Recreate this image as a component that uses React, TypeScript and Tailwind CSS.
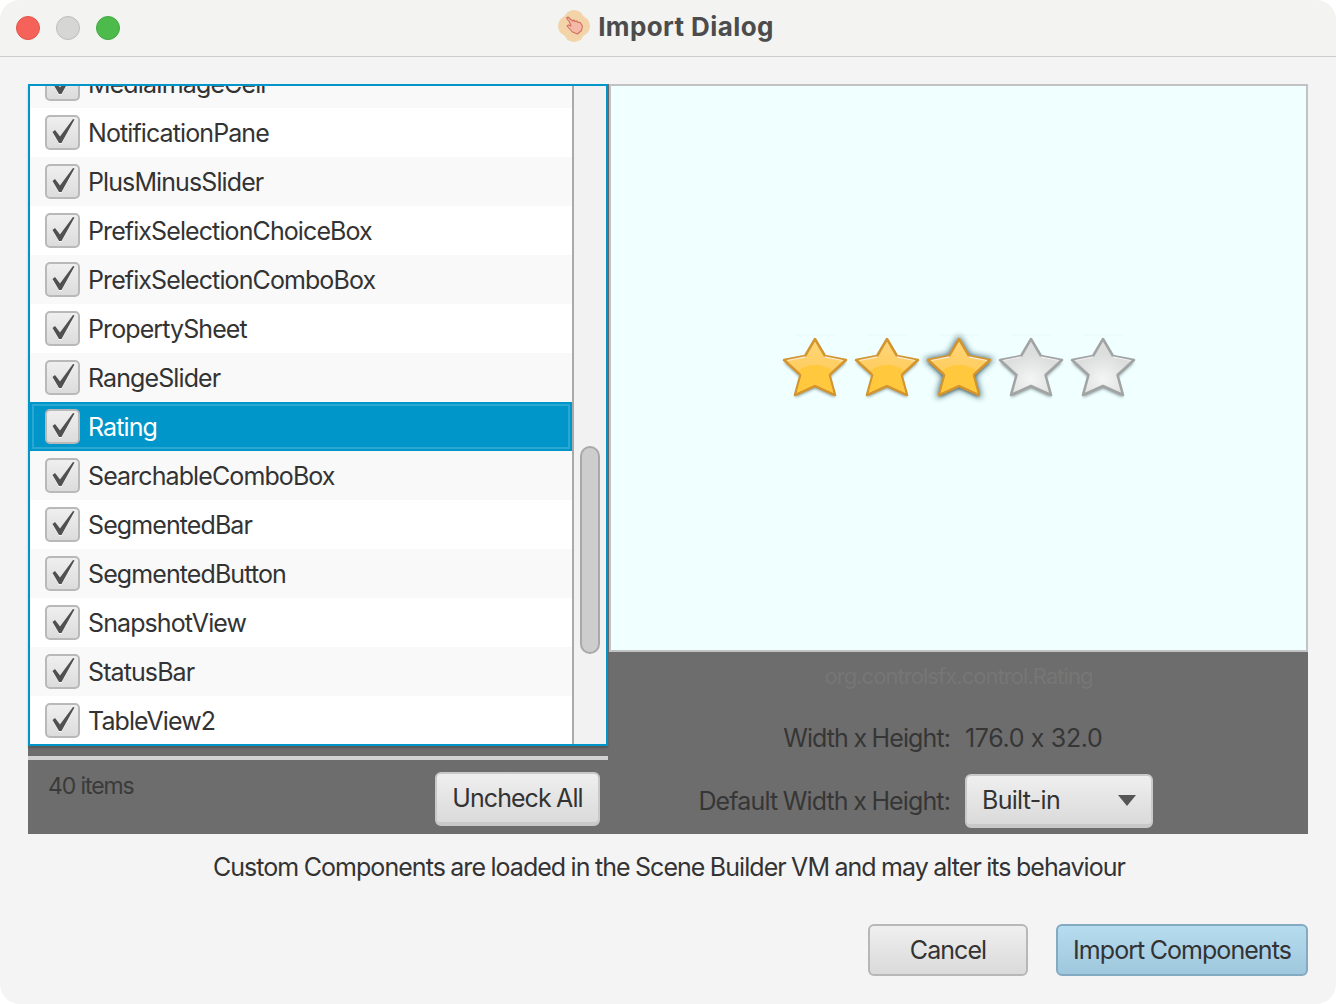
import React from "react";

const font = { fontFamily: "Inter, 'Noto Sans', sans-serif" };

const rows = [
  "NotificationPane",
  "PlusMinusSlider",
  "PrefixSelectionChoiceBox",
  "PrefixSelectionComboBox",
  "PropertySheet",
  "RangeSlider",
  "Rating",
  "SearchableComboBox",
  "SegmentedBar",
  "SegmentedButton",
  "SnapshotView",
  "StatusBar",
  "TableView2",
];

function Check() {
  return (
    <span className="w-[35px] h-[35px] shrink-0 rounded-[5px] border-2 border-[#b9b9b9] bg-gradient-to-b from-[#efefef] to-[#dcdcdc] flex">
      <svg width="31" height="31" viewBox="0 0 31 31">
        <path d="M5.5 16 L8 14 L13 20.5 L26 3 L27.5 3.5 L14.5 27 L12 27 Z" fill="#ffffff" opacity="0.7" />
        <path d="M5.5 15 L8 13 L13 19.5 L26 2 L27.5 2.5 L14.5 26 L12 26 Z" fill="#505050" />
      </svg>
    </span>
  );
}

function Row({ label, index }: { label: string; index: number }) {
  const selected = label === "Rating";
  const odd = index % 2 === 1;
  return (
    <div
      className={`h-[49px] shrink-0 flex items-center pl-[15px] gap-[8px] text-[25px] tracking-[-0.9px] ${
        selected
          ? "bg-[#0096c9] text-white shadow-[inset_0_0_0_2px_#0096c9,inset_0_0_0_4px_#2aa8d4]"
          : odd
            ? "bg-[#f9f9f9] text-[#333333]"
            : "bg-white text-[#333333]"
      }`}
    >
      <Check />
      <span className="pt-[2px]">{label}</span>
    </div>
  );
}

function Star({ on, glow }: { on: boolean; glow?: boolean }) {
  const pts = "32,1 42,18 63,22 46.5,37 52,57 32,48 12,57 17.5,37 1,22 22,18";
  return (
    <svg width="64" height="64" viewBox="0 0 64 64" className="overflow-visible">
      <defs>
        <linearGradient id="goldTop" x1="0" y1="0" x2="0" y2="1">
          <stop offset="0" stopColor="#ffd67a" />
          <stop offset="1" stopColor="#ffc64a" />
        </linearGradient>
        <radialGradient id="silverFill" cx="0.5" cy="0.72" r="0.45">
          <stop offset="0" stopColor="#f4f6f5" />
          <stop offset="1" stopColor="#dcdedd" />
        </radialGradient>
        <filter id="blur2" x="-30%" y="-30%" width="160%" height="160%">
          <feGaussianBlur stdDeviation="3" />
        </filter>
        <filter id="blur1" x="-30%" y="-30%" width="160%" height="160%">
          <feGaussianBlur stdDeviation="1.5" />
        </filter>
        <filter id="blur05" x="-10%" y="-10%" width="120%" height="120%">
          <feGaussianBlur stdDeviation="0.6" />
        </filter>
      </defs>
      <path d="M12 -3 H52" stroke="#8a9a9a" strokeWidth="1" opacity="0.08" />
      {glow ? (
        <polygon points={pts} fill="#1f4a56" stroke="#1f4a56" strokeWidth="4" opacity="0.8" filter="url(#blur2)" />
      ) : null}
      <polygon points={pts} transform="translate(0 2.5)" fill="#3f5658" opacity="0.6" filter="url(#blur1)" />
      <g filter="url(#blur05)">
        <polygon
          points={pts}
          fill={on ? "url(#goldTop)" : "url(#silverFill)"}
          stroke={on ? "#d3952f" : "#a2a4a3"}
          strokeWidth="2.5"
          strokeLinejoin="round"
        />
        {on ? (
          <path d="M15.5 32 Q32 22 48.5 32 L45.5 37 L50.5 55 L32 46.5 L13.5 55 L18.5 37 Z" fill="#ffc83e" />
        ) : null}
        <path d="M4 22.5 L22.5 18.8 M41.5 18.8 L60 22.5" stroke="#ffffff" strokeWidth="1.2" opacity="0.8" />
      </g>
    </svg>
  );
}

function Logo() {
  return (
    <svg width="32" height="32" viewBox="0 0 32 32">
      <g fill="#f2c27c" opacity="0.62">
        <ellipse cx="16" cy="9.5" rx="10" ry="9.5" />
        <ellipse cx="16" cy="22.5" rx="10" ry="9.5" />
        <ellipse cx="9" cy="16" rx="9" ry="10" />
        <ellipse cx="23" cy="16" rx="9" ry="10" />
      </g>
      <path
        d="M8.5 8 L10 7 L14.5 11 L15.8 10 L17.2 11.5 L18.8 11 L20.2 12.5 L22 12.2 L24.5 16 L23.5 20.5 L19.5 24 L14.5 22 L9 16 L10.5 15 L13 16 L11.5 12 Z"
        fill="#f4b8a8"
        stroke="#d2705c"
        strokeWidth="1.1"
        strokeLinejoin="round"
      />
    </svg>
  );
}

function Btn({ children, className }: { children: React.ReactNode; className: string }) {
  return (
    <button
      className={`rounded-[6px] border-2 text-[25px] tracking-[-0.95px] [word-spacing:-0.7px] text-[#333333] flex items-center ${className}`}
    >
      {children}
    </button>
  );
}

export default function App() {
  return (
    <div className="w-[1336px] h-[1004px] bg-white overflow-hidden" style={font}>
      <div className="w-full h-full rounded-[20px] bg-[#f4f4f4] flex flex-col overflow-hidden">
        <header className="h-[57px] shrink-0 border-b border-[#cdcdcd] bg-[#f3f3f2] relative flex items-center justify-center">
          <div className="absolute left-[16px] top-[16px] flex gap-[16px]">
            <span className="w-[24px] h-[24px] rounded-full bg-[#f5625a] border border-[#e0534b]" />
            <span className="w-[24px] h-[24px] rounded-full bg-[#d6d6d4] border border-[#bdbdbb]" />
            <span className="w-[24px] h-[24px] rounded-full bg-[#4dbb4b] border border-[#42a841]" />
          </div>
          <div className="flex items-center gap-[8px] -mt-[4px] -ml-[4px]">
            <Logo />
            <span className="text-[26px] font-bold tracking-[0.4px] text-[#4c4c4c]">Import Dialog</span>
          </div>
        </header>

        <main className="mx-[28px] mt-[27px] h-[750px] shrink-0 flex bg-[#6d6d6d]">
          <section className="w-[580px] shrink-0 flex flex-col">
            <div className="h-[662px] shrink-0 border-2 border-[#0096c9] flex overflow-hidden bg-white shadow-[0_2px_2px_rgba(0,0,0,0.2)]">
              <div className="w-[542px] shrink-0 flex flex-col overflow-hidden">
                <div className="h-[49px] shrink-0 -mt-[27px] bg-[#f9f9f9] flex items-center pl-[15px] gap-[8px] text-[25px] tracking-[-0.9px] text-[#333333]">
                  <Check />
                  <span className="pt-[2px]">MediaImageCell</span>
                </div>
                {rows.map((r, i) => (
                  <Row key={r} label={r} index={i} />
                ))}
              </div>
              <div className="flex-1 border-l-2 border-[#aaaaaa] bg-[#f2f2f2] pl-[6px] pt-[360px]">
                <div className="w-[20px] h-[208px] rounded-[10px] border-2 border-[#a9a9a9] bg-[#cdcdcd]" />
              </div>
            </div>
            <div className="h-[4px] mt-[10px] shrink-0 bg-[#d2d2d2]" />
            <div className="flex-1 flex items-start justify-between pl-[21px] pr-[8px] pt-[12px]">
              <span className="text-[23px] tracking-[-1.1px] text-[#3a3a3a] -mt-[3px] -ml-[1px]">40 items</span>
              <Btn className="w-[165px] h-[54px] pt-[2px] justify-center bg-gradient-to-b from-[#efefef] to-[#dadada] border-[#c9c9c9] border-b-[4px]">
                Uncheck All
              </Btn>
            </div>
          </section>

          <section className="flex-1 flex flex-col pl-[1px]">
            <div className="h-[568px] shrink-0 bg-[#f0ffff] border-2 border-[#c2c2c2] flex items-center justify-center">
              <div className="flex gap-[8px] mt-[4px] ml-[1px]">
                <Star on />
                <Star on />
                <Star on glow />
                <Star on={false} />
                <Star on={false} />
              </div>
            </div>
            <div className="flex-1 relative">
              <div className="text-center text-[22px] tracking-[-0.95px] text-[#767676] mt-[10px] leading-[28px]">
                org.controlsfx.control.Rating
              </div>
              <div className="grid grid-cols-[341px_1fr] gap-x-[15px] items-center mt-[33px]">
                <span className="text-right text-[25px] tracking-[-0.9px] [word-spacing:-0.7px] text-[#363636] h-[30px] leading-[30px]">Width x Height:</span>
                <span className="text-[25px] tracking-[-0.35px] text-[#363636] h-[30px] leading-[30px]">176.0 x 32.0</span>
              </div>
              <div className="grid grid-cols-[341px_1fr] gap-x-[15px] items-center mt-[21px]">
                <span className="text-right text-[25px] tracking-[-0.87px] [word-spacing:-0.7px] text-[#363636] pt-[2px]">Default Width x Height:</span>
                <Btn className="w-[188px] h-[54px] justify-between pl-[15px] pr-[15px] bg-gradient-to-b from-[#efefef] to-[#dadada] border-[#c9c9c9] border-b-[4px]">
                  <span className="pt-[2px] tracking-[-0.7px]">Built-in</span>
                  <svg width="18" height="11" viewBox="0 0 18 11">
                    <path d="M0 0 H18 L9 11 Z" fill="#555555" />
                  </svg>
                </Btn>
              </div>
            </div>
          </section>
        </main>

        <p className="text-center text-[25px] tracking-[-0.95px] [word-spacing:-0.7px] text-[#333333] mt-[18px] leading-[30px] pl-[2px]">
          Custom Components are loaded in the Scene Builder VM and may alter its behaviour
        </p>

        <footer className="flex justify-end gap-[28px] pr-[28px] mt-[42px]">
          <Btn className="w-[160px] h-[52px] pt-[2px] justify-center bg-gradient-to-b from-[#efefef] to-[#dadada] border-[#b7b7b7]">
            Cancel
          </Btn>
          <Btn className="w-[252px] h-[52px] pt-[2px] justify-center bg-gradient-to-b from-[#b6dcef] to-[#9fc7dd] border-[#83aac0]">
            Import Components
          </Btn>
        </footer>
      </div>
    </div>
  );
}
